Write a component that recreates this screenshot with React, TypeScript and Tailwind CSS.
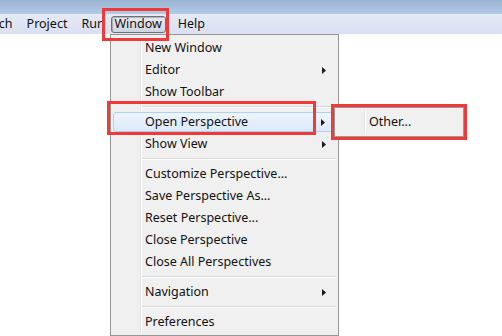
import React from 'react'

type Item =
  | { kind: 'item'; label: string; sub?: boolean; active?: boolean }
  | { kind: 'sep' }

const items: Item[] = [
  { kind: 'item', label: 'New Window' },
  { kind: 'item', label: 'Editor', sub: true },
  { kind: 'item', label: 'Show Toolbar' },
  { kind: 'sep' },
  { kind: 'item', label: 'Open Perspective', sub: true, active: true },
  { kind: 'item', label: 'Show View', sub: true },
  { kind: 'sep' },
  { kind: 'item', label: 'Customize Perspective...' },
  { kind: 'item', label: 'Save Perspective As...' },
  { kind: 'item', label: 'Reset Perspective...' },
  { kind: 'item', label: 'Close Perspective' },
  { kind: 'item', label: 'Close All Perspectives' },
  { kind: 'sep' },
  { kind: 'item', label: 'Navigation', sub: true },
  { kind: 'sep' },
  { kind: 'item', label: 'Preferences' },
]

const font = { fontFamily: '"Noto Sans", "Noto Sans CJK SC", sans-serif' }

const Arrow = () => (
  <svg width="4" height="7" viewBox="0 0 4 7" className="mr-[10px] shrink-0">
    <path d="M0 0 L4 3.5 L0 7 Z" fill="#1a1a1a" />
  </svg>
)

// gutter strip down the left of a win7 menu
const Gutter = () => <div className="w-[28px] self-stretch shrink-0 border-r border-[#e2e3e3] shadow-[1px_0_0_#fff]" />

const MenuRow = ({ item }: { item: Item }) => {
  if (item.kind === 'sep') {
    return (
      <div className="h-[8px] flex">
        <Gutter />
        <div className="flex-1 flex flex-col justify-center pl-[1px]">
          <div className="h-px bg-[#d7d7d7]" />
          <div className="h-px bg-white" />
        </div>
      </div>
    )
  }
  if (item.active) {
    return (
      <div className="h-[22px] py-[1px]">
        <div className="h-full flex items-center rounded-[3px] border border-[#aecff7] bg-gradient-to-b from-[#eef5fd] to-[#dbe9fa]">
          <span className="flex-1 pl-[31px] text-[12.5px] text-[#111]">{item.label}</span>
          {item.sub && <Arrow />}
        </div>
      </div>
    )
  }
  return (
    <div className="h-[22px] flex items-center">
      <Gutter />
      <span className="flex-1 pl-[4px] text-[12.5px] text-[#111]">{item.label}</span>
      {item.sub && <Arrow />}
    </div>
  )
}

export default function App() {
  return (
    <div className="relative w-[502px] h-[336px] overflow-hidden bg-white" style={font}>
      <div className="h-[14px] bg-gradient-to-b from-[#9ab4d3] to-[#b4cbe5]" />
      <div className="h-px bg-[#e6eef8]" />
      <div className="h-[19px] flex items-center bg-gradient-to-b from-[#e4e9f5] to-[#d9e0f0] text-[12.5px] text-[#111] whitespace-nowrap">
        <span className="ml-[-34px] px-[7px]">Search</span>
        <span className="px-[7px]">Project</span>
        <span className="px-[7px]">Run</span>
        <span className="ml-[-1px] h-[17px] w-[55px] flex items-center justify-center rounded-[3px] border border-[#6e7179] bg-gradient-to-b from-[#e9ecf3] to-[#cfd4e0] shadow-[inset_1px_1px_1px_rgba(0,0,0,0.25)]">
          Window
        </span>
        <span className="px-[12px]">Help</span>
      </div>

      <div className="absolute left-[110px] top-[34px] w-[229px] border border-[#979797] bg-[#f0f0f0] p-[2px]">
        {items.map((it, i) => (
          <MenuRow key={i} item={it} />
        ))}
      </div>

      <div className="absolute left-[334px] top-[107px] w-[130px] border border-[#979797] bg-[#f0f0f0] p-[2px]">
        <div className="h-[24px] flex items-center">
          <Gutter />
          <span className="pl-[4px] text-[12.5px] text-[#111]">Other...</span>
        </div>
      </div>

      <div className="absolute left-[102px] top-[8px] w-[67px] h-[33px] border-[3px] border-[#f03a3a]" />
      <div className="absolute left-[107px] top-[101px] w-[209px] h-[34px] border-[3px] border-[#f03a3a]" />
      <div className="absolute left-[331px] top-[104px] w-[136px] h-[36px] border-[3px] border-[#f03a3a]" />
    </div>
  )
}
